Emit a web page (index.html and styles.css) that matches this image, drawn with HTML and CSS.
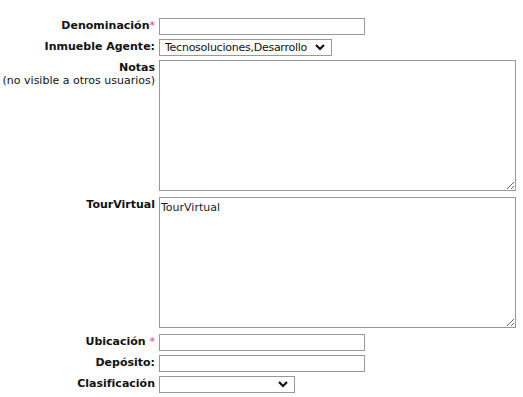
FILE: index.html
```html
<!DOCTYPE html>
<html lang="es">
<head>
    <meta charset="UTF-8">
    <meta name="viewport" content="width=device-width, initial-scale=1.0">
    <title>Inmueble</title>
    <link rel="stylesheet" href="styles.css">
</head>
<body>

<form class="ficha">
    <label class="etiqueta" for="denominacion">Denominación<span class="req">*</span></label>
    <div class="campo"><input id="denominacion" class="texto" type="text"></div>

    <label class="etiqueta" for="agente">Inmueble Agente:</label>
    <div class="campo">
        <div class="lista-wrap">
            <select id="agente" class="lista lista-agente">
                <option>Tecnosoluciones,Desarrollo</option>
            </select>
            <svg class="chevron" width="10" height="7" viewBox="0 0 10 7"><polyline points="1,1 5,5 9,1" fill="none" stroke="#111" stroke-width="2.2"/></svg>
        </div>
    </div>

    <label class="etiqueta" for="notas">Notas<span class="nota">(no visible a otros usuarios)</span></label>
    <div class="campo"><textarea id="notas" class="area"></textarea></div>

    <label class="etiqueta" for="tour">TourVirtual</label>
    <div class="campo"><textarea id="tour" class="area">TourVirtual</textarea></div>

    <label class="etiqueta" for="ubicacion">Ubicación <span class="req">*</span></label>
    <div class="campo"><input id="ubicacion" class="texto" type="text"></div>

    <label class="etiqueta" for="deposito">Depósito:</label>
    <div class="campo"><input id="deposito" class="texto" type="text"></div>

    <label class="etiqueta" for="clasificacion">Clasificación</label>
    <div class="campo">
        <div class="lista-wrap">
            <select id="clasificacion" class="lista lista-clasif">
                <option></option>
            </select>
            <svg class="chevron" width="10" height="7" viewBox="0 0 10 7"><polyline points="1,1 5,5 9,1" fill="none" stroke="#111" stroke-width="2.2"/></svg>
        </div>
    </div>
</form>

</body>
</html>
```

FILE: styles.css
```css
body {
  margin: 0;
  background: #fff;
  color: #111;
  font-family: "DejaVu Sans", Verdana, sans-serif;
  font-size: 11px;
}

.ficha {
  display: grid;
  grid-template-columns: 155px auto;
  column-gap: 4px;
  row-gap: 4px;
  padding-top: 18px;
}

.etiqueta {
  align-self: start;
  text-align: right;
  font-weight: bold;
  line-height: 13px;
  padding-top: 1px;
}

.nota {
  display: block;
  font-weight: normal;
  white-space: nowrap;
}

.req {
  color: #e0406c;
  font-weight: normal;
}

.campo {
  justify-self: start;
}

.texto {
  display: block;
  box-sizing: border-box;
  width: 206px;
  height: 17px;
  margin: 0;
  padding: 0 2px;
  border: 1px solid #999;
  font: 11px "DejaVu Sans", Verdana, sans-serif;
}

.lista-wrap {
  position: relative;
}

.lista {
  display: block;
  box-sizing: border-box;
  height: 17px;
  margin: 0;
  padding: 0 0 0 5px;
  border: 1px solid #999;
  background: #fff;
  color: #111;
  font: 11px "DejaVu Sans", Verdana, sans-serif;
  letter-spacing: -0.25px;
  appearance: none;
  -webkit-appearance: none;
  border-radius: 0;
}

.lista-agente { width: 173px; }
.lista-clasif { width: 136px; }

.chevron {
  position: absolute;
  right: 7px;
  top: 5px;
  pointer-events: none;
}

.area {
  display: block;
  box-sizing: border-box;
  width: 357px;
  height: 131px;
  margin: 0 0 2px;
  padding: 3px 1px;
  border: 1px solid #999;
  color: #222;
  font: 11px "DejaVu Sans", Verdana, sans-serif;
}
```
